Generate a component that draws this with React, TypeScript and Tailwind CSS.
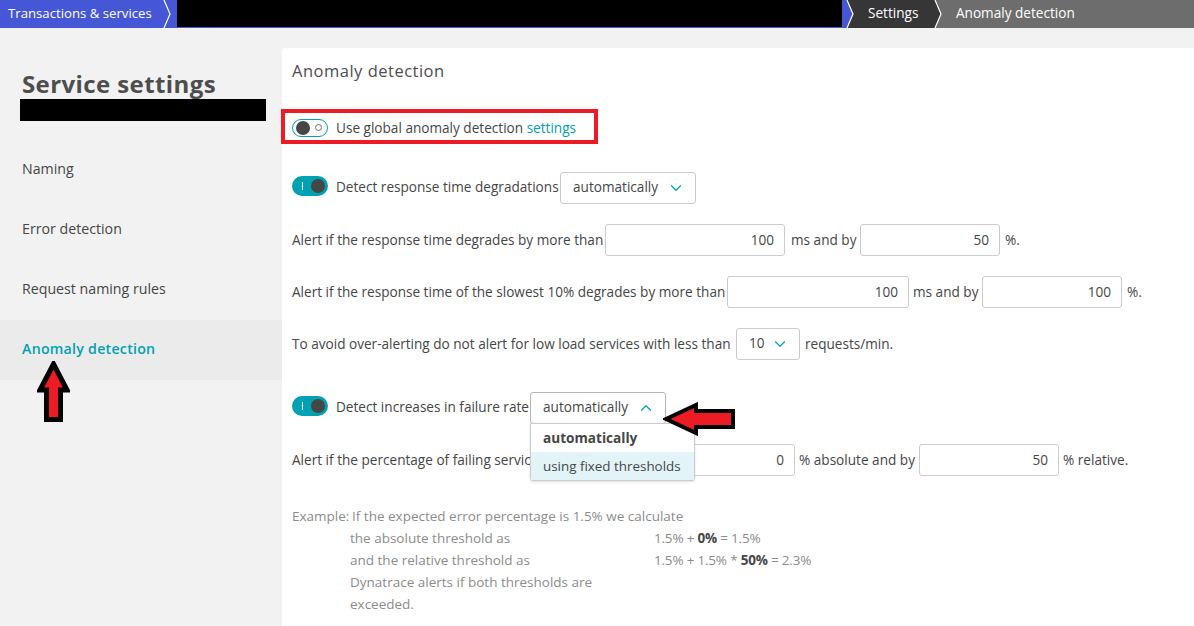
import React from 'react'
import { ChevronDown, ChevronUp } from 'lucide-react'

const navItems = ['Naming', 'Error detection', 'Request naming rules', 'Anomaly detection']

function Chevron({ left, right }: { left: string; right: string }) {
  return (
    <svg viewBox="0 0 12 28" className="w-[12px] h-7 shrink-0">
      <rect width="12" height="28" fill={right} />
      <polygon points="0,0 5,0 11,14 5,28 0,28" fill={left} />
      <polyline points="5,0 11,14 5,28" fill="none" stroke="#ffffff" strokeWidth="1.2" />
    </svg>
  )
}

function Toggle({ on, className = '' }: { on: boolean; className?: string }) {
  if (on) {
    return (
      <div className={`w-9 h-5 rounded-full bg-[#00a1b2] flex items-center justify-between pl-[10px] pr-[3px] shrink-0 ${className}`}>
        <div className="w-px h-2 bg-white" />
        <div className="w-[14px] h-[14px] rounded-full bg-[#454646]" />
      </div>
    )
  }
  return (
    <div className={`w-9 h-[18px] rounded-full border border-[#00a1b2] bg-white flex items-center justify-between pl-[3px] pr-[5px] shrink-0 ${className}`}>
      <div className="w-[14px] h-[14px] rounded-full bg-[#454646]" />
      <div className="w-[7px] h-[7px] rounded-full border border-[#6d6d6d]" />
    </div>
  )
}

function Select({ value, className, open }: { value: string; className: string; open?: boolean }) {
  return (
    <div className={`h-8 rounded-[3px] border bg-white flex items-center justify-between pl-3 pr-[10px] shrink-0 ${open ? 'border-[#b4b4b4]' : 'border-[#cccccc]'} ${className}`}>
      <span className="pb-[2px]">{value}</span>
      {open ? (
        <ChevronUp className="w-[18px] h-[18px] text-[#00a1b2]" strokeWidth={1.6} />
      ) : (
        <ChevronDown className="w-[18px] h-[18px] text-[#00a1b2]" strokeWidth={1.6} />
      )}
    </div>
  )
}

function NumberInput({ value, className }: { value: string; className: string }) {
  return (
    <div className={`h-8 rounded-[3px] border border-[#cccccc] bg-white flex items-center justify-end pr-[10px] pt-[1px] shrink-0 ${className}`}>
      {value}
    </div>
  )
}

function UpArrow() {
  return (
    <svg viewBox="0 0 33 61" className="absolute left-[37px] top-[361px] w-[33px] h-[61px]">
      <polygon points="16.5,3 30,29 23.5,29 23.5,58.5 9.5,58.5 9.5,29 3,29" fill="#ed1c24" stroke="#000000" strokeWidth="5" strokeLinejoin="miter" />
    </svg>
  )
}

function LeftArrow() {
  return (
    <svg viewBox="0 0 73 34" className="absolute left-[663px] top-[402px] w-[73px] h-[34px]">
      <polygon points="3,17 33,3 33,9 70,9 70,25 33,25 33,31" fill="#ed1c24" stroke="#000000" strokeWidth="4" />
    </svg>
  )
}

export default function App() {
  return (
    <div className="relative w-[1194px] h-[626px] overflow-hidden bg-[#f2f2f2] text-[13.6px] text-[#454646] font-['Open_Sans',sans-serif]">
      <header className="flex h-7 text-white bg-[#4556d7]">
        <div className="w-[177px] flex items-center shrink-0">
          <span className="w-[159px] pl-2 pb-[1px] text-[13.2px]">Transactions &amp; services</span>
          <Chevron left="#4556d7" right="#4556d7" />
        </div>
        <div className="w-[665px] h-[27px] bg-black shrink-0" />
        <Chevron left="#4556d7" right="#363636" />
        <div className="w-[76px] bg-[#363636] flex items-center pl-[14px] pb-[1px] shrink-0">Settings</div>
        <Chevron left="#363636" right="#6d6d6d" />
        <div className="flex-1 bg-[#6d6d6d] flex items-center pl-[14px] pb-[1px]">Anomaly detection</div>
      </header>

      <div className="flex h-[598px]">
        <aside className="w-[282px] shrink-0">
          <h1 className="pl-[22px] pt-[41px] text-[24px] leading-[30px] font-bold tracking-[0.4px] text-[#4d4d4d]">Service settings</h1>
          <div className="ml-5 w-[246px] h-[22px] bg-black" />
          <nav className="mt-[19px]">
            {navItems.map((item, i) => (
              <div
                key={item}
                className={`h-[60px] pl-[22px] pb-[3px] flex items-center text-[14.2px] ${i === 3 ? 'bg-[#ebebeb] text-[#00a1b2] font-semibold tracking-[0.25px]' : ''}`}
              >
                {item}
              </div>
            ))}
          </nav>
        </aside>

        <main className="flex-1 mt-5 bg-white rounded-tl-[3px] pl-[10px]">
          <h2 className="pt-[12px] text-[16.5px] leading-[22px] tracking-[0.5px] text-[#4d4d4d]">Anomaly detection</h2>

          <div className="mt-[27px] -ml-[11px] w-[317px] h-[35px] border-[4px] border-[#ed1c24] flex items-center pl-[7px] pt-[4px] gap-2">
            <Toggle on={false} className="mb-[2px]" />
            <span>
              Use global anomaly detection <span className="text-[#00a1b2]">settings</span>
            </span>
          </div>

          <div className="mt-7 h-8 flex items-center">
            <Toggle on className="mb-[4px]" />
            <span className="ml-2 w-[224px] whitespace-nowrap pb-[2px]">Detect response time degradations</span>
            <Select value="automatically" className="w-[136px]" />
          </div>

          <div className="mt-5 h-8 flex items-center">
            <span className="w-[313px] whitespace-nowrap pt-[1px]">Alert if the response time degrades by more than</span>
            <NumberInput value="100" className="w-[180px]" />
            <span className="w-[75px] pl-[6px] whitespace-nowrap pt-[1px]">ms and by</span>
            <NumberInput value="50" className="w-[140px]" />
            <span className="pl-[5px] pt-[1px]">%.</span>
          </div>

          <div className="mt-5 h-8 flex items-center">
            <span className="w-[435px] whitespace-nowrap pt-[1px]">Alert if the response time of the slowest 10% degrades by more than</span>
            <NumberInput value="100" className="w-[182px]" />
            <span className="w-[73px] pl-[4px] whitespace-nowrap pt-[1px]">ms and by</span>
            <NumberInput value="100" className="w-[140px]" />
            <span className="pl-[5px] pt-[1px]">%.</span>
          </div>

          <div className="mt-5 h-8 flex items-center">
            <span className="w-[444px] whitespace-nowrap">To avoid over-alerting do not alert for low load services with less than</span>
            <Select value="10" className="w-16" />
            <span className="pl-[5px]">requests/min.</span>
          </div>

          <div className="mt-8 h-8 flex items-center">
            <Toggle on className="mb-[4px]" />
            <span className="ml-2 w-[194px] whitespace-nowrap pb-[2px]">Detect increases in failure rate</span>
            <Select value="automatically" className="w-[136px]" open />
          </div>

          <div className="mt-5 h-8 flex items-center">
            <span className="w-[363px] whitespace-nowrap pt-[1px]">Alert if the percentage of failing service requests</span>
            <NumberInput value="0" className="w-[140px]" />
            <span className="w-[124px] pl-[4px] whitespace-nowrap pt-[1px]">% absolute and by</span>
            <NumberInput value="50" className="w-[140px]" />
            <span className="pl-[4px] pt-[1px]">% relative.</span>
          </div>

          <div className="mt-[29px] grid grid-cols-[58px_304px_1fr] text-[13.5px] leading-[22px] text-[#8c8c8c]">
            <span>Example:</span>
            <span className="col-span-2 pl-[2px] whitespace-nowrap">If the expected error percentage is 1.5% we calculate</span>
            <span className="col-start-2">the absolute threshold as</span>
            <span className="tracking-[-0.2px]">
              1.5% + <b className="text-[#454646]">0%</b> = 1.5%
            </span>
            <span className="col-start-2">and the relative threshold as</span>
            <span className="tracking-[-0.2px]">
              1.5% + 1.5% * <b className="text-[#454646]">50%</b> = 2.3%
            </span>
            <span className="col-start-2 w-[250px]">Dynatrace alerts if both thresholds are exceeded.</span>
          </div>
        </main>
      </div>

      {/* open dropdown menu */}
      <div className="absolute left-[530px] top-[423px] w-[165px] h-[58px] bg-white border border-[#cccccc] rounded-b-[3px] shadow-sm">
        <div className="h-[28px] pl-3 flex items-center font-bold">automatically</div>
        <div className="h-[28px] pl-3 flex items-center bg-[#e2f4f8] text-[13.4px]">using fixed thresholds</div>
      </div>

      <UpArrow />
      <LeftArrow />
    </div>
  )
}
